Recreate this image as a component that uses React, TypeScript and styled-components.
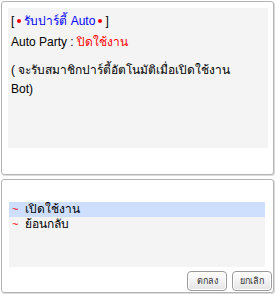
import React from "react";
import styled, { createGlobalStyle } from "styled-components";

const Global = createGlobalStyle`
  html, body { margin: 0; padding: 0; background: #ffffff; }
  body { width: 276px; height: 294px; overflow: hidden; font-family: Tahoma, "Liberation Sans", "Noto Sans", sans-serif; }
  * { box-sizing: border-box; }
`;

const Page = styled.div`
  position: relative;
  width: 276px;
  height: 294px;
  padding: 1px 0 0 1px;
  display: flex;
  flex-direction: column;
  gap: 4px;
`;

const Frame = styled.div<{ $h: number }>`
  width: 273px;
  height: ${(p) => p.$h}px;
  border: 1px solid #b4b4b4;
  border-radius: 3px;
  box-shadow: 1px 1px 0 #dcdcdc;
  background: #ffffff;
  display: flex;
  flex-direction: column;
`;

const InfoBox = styled.div`
  margin: 6px 0 0 6px;
  width: 260px;
  height: 140px;
  background: #f4f4f4;
  padding: 4px 3px;
  font-size: 12px;
  color: #000;
`;

const Line = styled.div<{ $mt?: number }>`
  line-height: 19px;
  margin-top: ${(p) => p.$mt ?? 0}px;
  white-space: nowrap;
`;

const Red = styled.span`
  color: #ff0000;
`;
const Blue = styled.span`
  color: #0000ff;
`;

const Dot = styled.span`
  display: inline-block;
  width: 4px;
  height: 4px;
  border-radius: 50%;
  background: #ff0000;
  vertical-align: middle;
  margin: 0 3px 2px 3px;
`;

const ListBox = styled.div`
  margin: 22px 0 0 7px;
  width: 256px;
  height: 65px;
  background: #f4f4f4;
  font-size: 12px;
`;

const Item = styled.div<{ $active?: boolean }>`
  height: 15px;
  line-height: 15px;
  padding-left: 3px;
  background: ${(p) => (p.$active ? "#cddffc" : "transparent")};
  display: flex;
  align-items: center;
  gap: 5px;
  white-space: nowrap;
`;

const Tilde = styled.span`
  color: #ff0000;
  font-size: 11px;
  width: 8px;
`;

const Buttons = styled.div`
  display: flex;
  justify-content: flex-end;
  gap: 5px;
  margin-top: 4px;
  padding-right: 1px;
`;

const Button = styled.button`
  width: 40px;
  height: 20px;
  border: 1px solid #9a9a9a;
  border-radius: 4px;
  background: linear-gradient(#ffffff, #e4e4e4);
  box-shadow: inset 0 0 0 1px #ffffff;
  font-family: Tahoma, "Liberation Sans", "Noto Sans", sans-serif;
  font-size: 9px;
  color: #333;
  padding: 0;
  line-height: 18px;
`;

export default function App() {
  return (
    <>
      <Global />
      <Page>
        <Frame $h={174}>
          <InfoBox>
            <Line>
              [<Dot />
              <Blue>รับปาร์ตี้ Auto</Blue>
              <Dot />]
            </Line>
            <Line $mt={2}>
              Auto Party : <Red>ปิดใช้งาน</Red>
            </Line>
            <Line $mt={9}>( จะรับสมาชิกปาร์ตี้อัตโนมัติเมื่อเปิดใช้งาน</Line>
            <Line>Bot)</Line>
          </InfoBox>
        </Frame>
        <Frame $h={114}>
          <ListBox>
            <Item $active>
              <Tilde>~</Tilde>เปิดใช้งาน
            </Item>
            <Item>
              <Tilde>~</Tilde>ย้อนกลับ
            </Item>
          </ListBox>
          <Buttons>
            <Button>ตกลง</Button>
            <Button>ยกเลิก</Button>
          </Buttons>
        </Frame>
      </Page>
    </>
  );
}
